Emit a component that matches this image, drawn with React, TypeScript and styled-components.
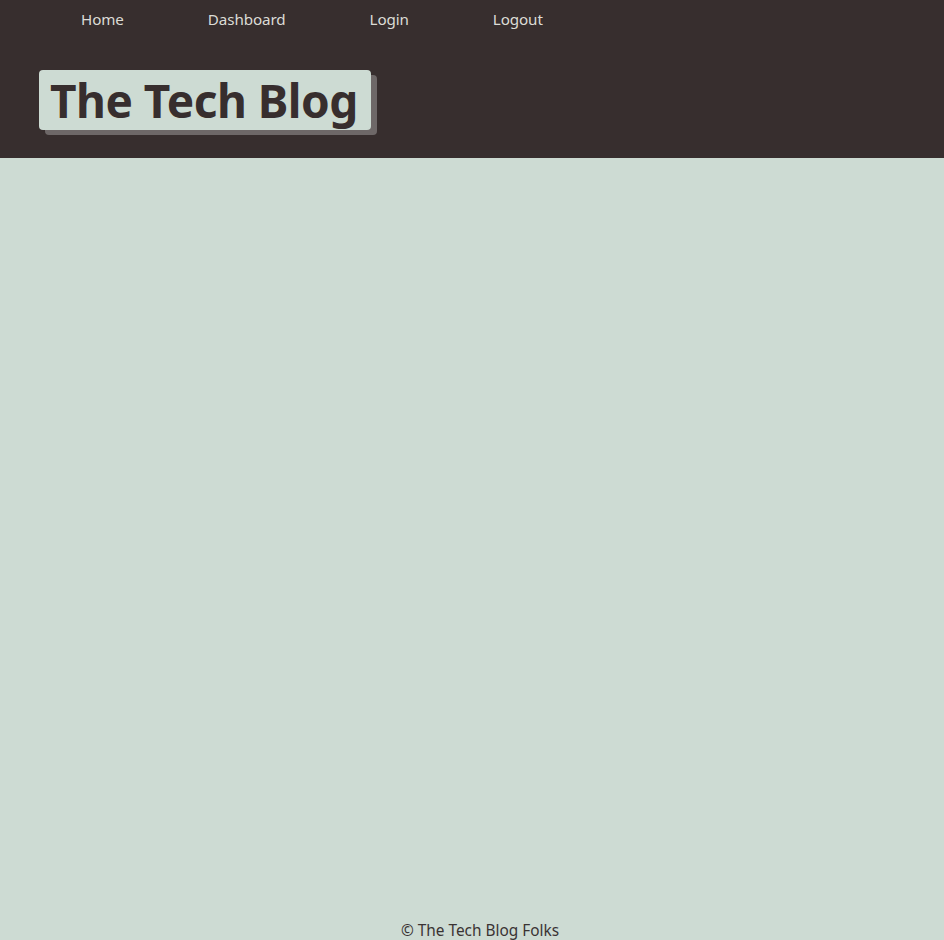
import React from "react";
import styled, { createGlobalStyle } from "styled-components";

const GlobalStyle = createGlobalStyle`
    html, body {
        margin: 0;
        padding: 0;
        background: #cddbd3;
    }
    body {
        font-family: "Noto Sans", "Open Sans", sans-serif;
    }
`;

const Page = styled.div`
    display: flex;
    flex-direction: column;
    min-height: 940px;
    background: #cddbd3;
`;

const Header = styled.header`
    background: #372e2e;
    height: 158px;
    box-sizing: border-box;
    display: flex;
    flex-direction: column;
    padding: 0 0 0 39px;
`;

const Nav = styled.nav`
    display: flex;
    gap: 84px;
    padding: 9px 0 0 42px;
    height: 70px;
    box-sizing: border-box;
`;

const NavLink = styled.a`
    color: #dcdcd6;
    font-size: 15.2px;
    line-height: 21px;
    text-decoration: none;
    letter-spacing: -0.1px;
`;

const TitleBox = styled.h1`
    align-self: flex-start;
    margin: 0;
    background: #cddbd3;
    color: #372e2e;
    border-radius: 4px;
    box-shadow: 6px 5px 0 #6e6868;
    font-size: 46px;
    font-weight: 700;
    line-height: 60px;
    padding: 0 13px 0 11px;
    letter-spacing: -0.5px;
`;

const Main = styled.main`
    flex: 1;
`;

const Footer = styled.footer`
    text-align: center;
    color: #3a3333;
    font-size: 15.4px;
    line-height: 19px;
    padding-left: 16px;
`;

export default function App() {
    return (
        <Page>
            <GlobalStyle />
            <Header>
                <Nav>
                    <NavLink href="#">Home</NavLink>
                    <NavLink href="#">Dashboard</NavLink>
                    <NavLink href="#">Login</NavLink>
                    <NavLink href="#">Logout</NavLink>
                </Nav>
                <TitleBox>The Tech Blog</TitleBox>
            </Header>
            <Main />
            <Footer>© The Tech Blog Folks</Footer>
        </Page>
    );
}
